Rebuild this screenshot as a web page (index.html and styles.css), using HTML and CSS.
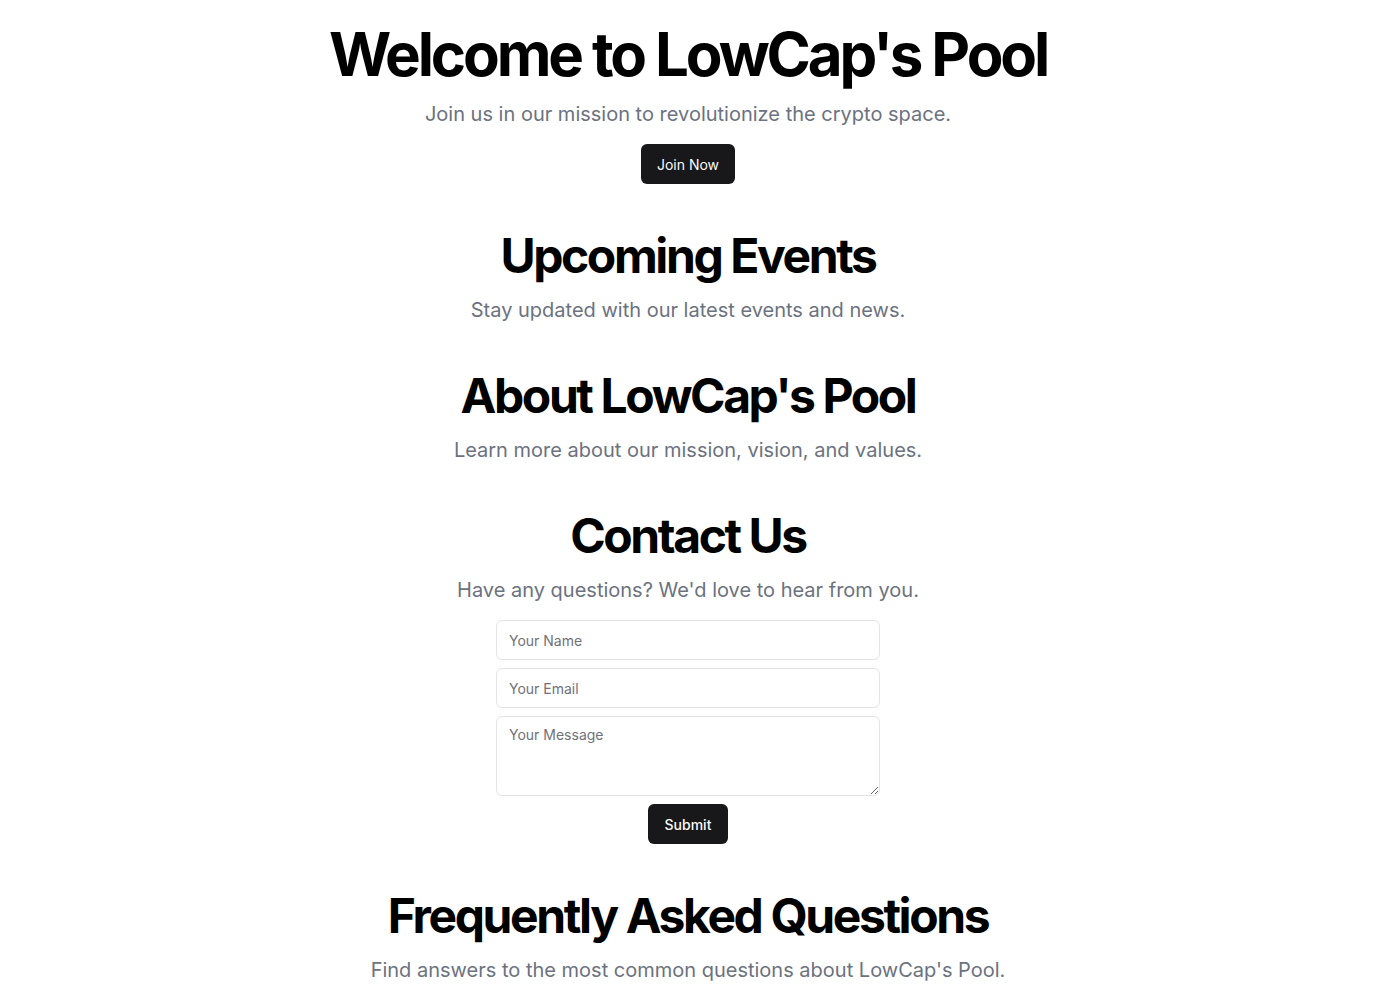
FILE: index.html
```html
<!DOCTYPE html>
<html lang="en">
<head>
<meta charset="utf-8">
<title>LowCap's Pool</title>
<link rel="stylesheet" href="styles.css">
</head>
<body>
<main class="page">
  <section class="hero">
    <h1 class="hero-title">Welcome to LowCap's Pool</h1>
    <p class="lead">Join us in our mission to revolutionize the crypto space.</p>
    <button class="btn btn-join" type="button">Join Now</button>
  </section>
  <section class="section">
    <h2 class="section-title">Upcoming Events</h2>
    <p class="lead">Stay updated with our latest events and news.</p>
  </section>
  <section class="section">
    <h2 class="section-title">About LowCap's Pool</h2>
    <p class="lead">Learn more about our mission, vision, and values.</p>
  </section>
  <section class="section">
    <h2 class="section-title">Contact Us</h2>
    <p class="lead">Have any questions? We'd love to hear from you.</p>
    <form class="contact-form">
      <input class="field" type="text" placeholder="Your Name">
      <input class="field" type="email" placeholder="Your Email">
      <textarea class="field field-area" placeholder="Your Message"></textarea>
      <button class="btn btn-submit" type="submit">Submit</button>
    </form>
  </section>
  <section class="section">
    <h2 class="section-title">Frequently Asked Questions</h2>
    <p class="lead">Find answers to the most common questions about LowCap's Pool.</p>
  </section>
</main>
</body>
</html>
```

FILE: styles.css
```css
* { box-sizing: border-box; }
html, body { margin: 0; padding: 0; background: #ffffff; }
body {
  font-family: Inter, "Noto Sans", "Liberation Sans", sans-serif;
  color: #09090b;
}
.page {
  display: flex;
  flex-direction: column;
  align-items: center;
  padding-top: 24px;
  gap: 48px;
}
.hero, .section {
  display: flex;
  flex-direction: column;
  align-items: center;
  gap: 16px;
  text-align: center;
}
.hero-title {
  margin: 0;
  font-size: 60px;
  line-height: 60px;
  font-weight: 700;
  letter-spacing: -0.052em;
  color: #000;
}
.section-title {
  margin: 0;
  font-size: 48px;
  line-height: 48px;
  font-weight: 700;
  letter-spacing: -0.05em;
  color: #000;
}
.lead {
  margin: 0;
  font-size: 20px;
  line-height: 28px;
  color: #6b7280;
}
.btn {
  height: 40px;
  padding: 0 16px;
  border: none;
  border-radius: 6px;
  background: #18181b;
  color: #fafafa;
  font-family: inherit;
  font-size: 14px;
  font-weight: 500;
  cursor: pointer;
}
.btn-join { font-weight: 400; }
.btn-submit { padding: 0 17px; }
.contact-form {
  width: 384px;
  display: flex;
  flex-direction: column;
  align-items: center;
  gap: 8px;
}
.field {
  width: 100%;
  height: 40px;
  padding: 8px 12px;
  border: 1px solid #e4e4e7;
  border-radius: 6px;
  background: #fff;
  font-family: inherit;
  font-size: 14px;
  color: #09090b;
}
.field::placeholder { color: #71717a; }
.field-area {
  height: 80px;
  resize: vertical;
  line-height: 20px;
}
```
